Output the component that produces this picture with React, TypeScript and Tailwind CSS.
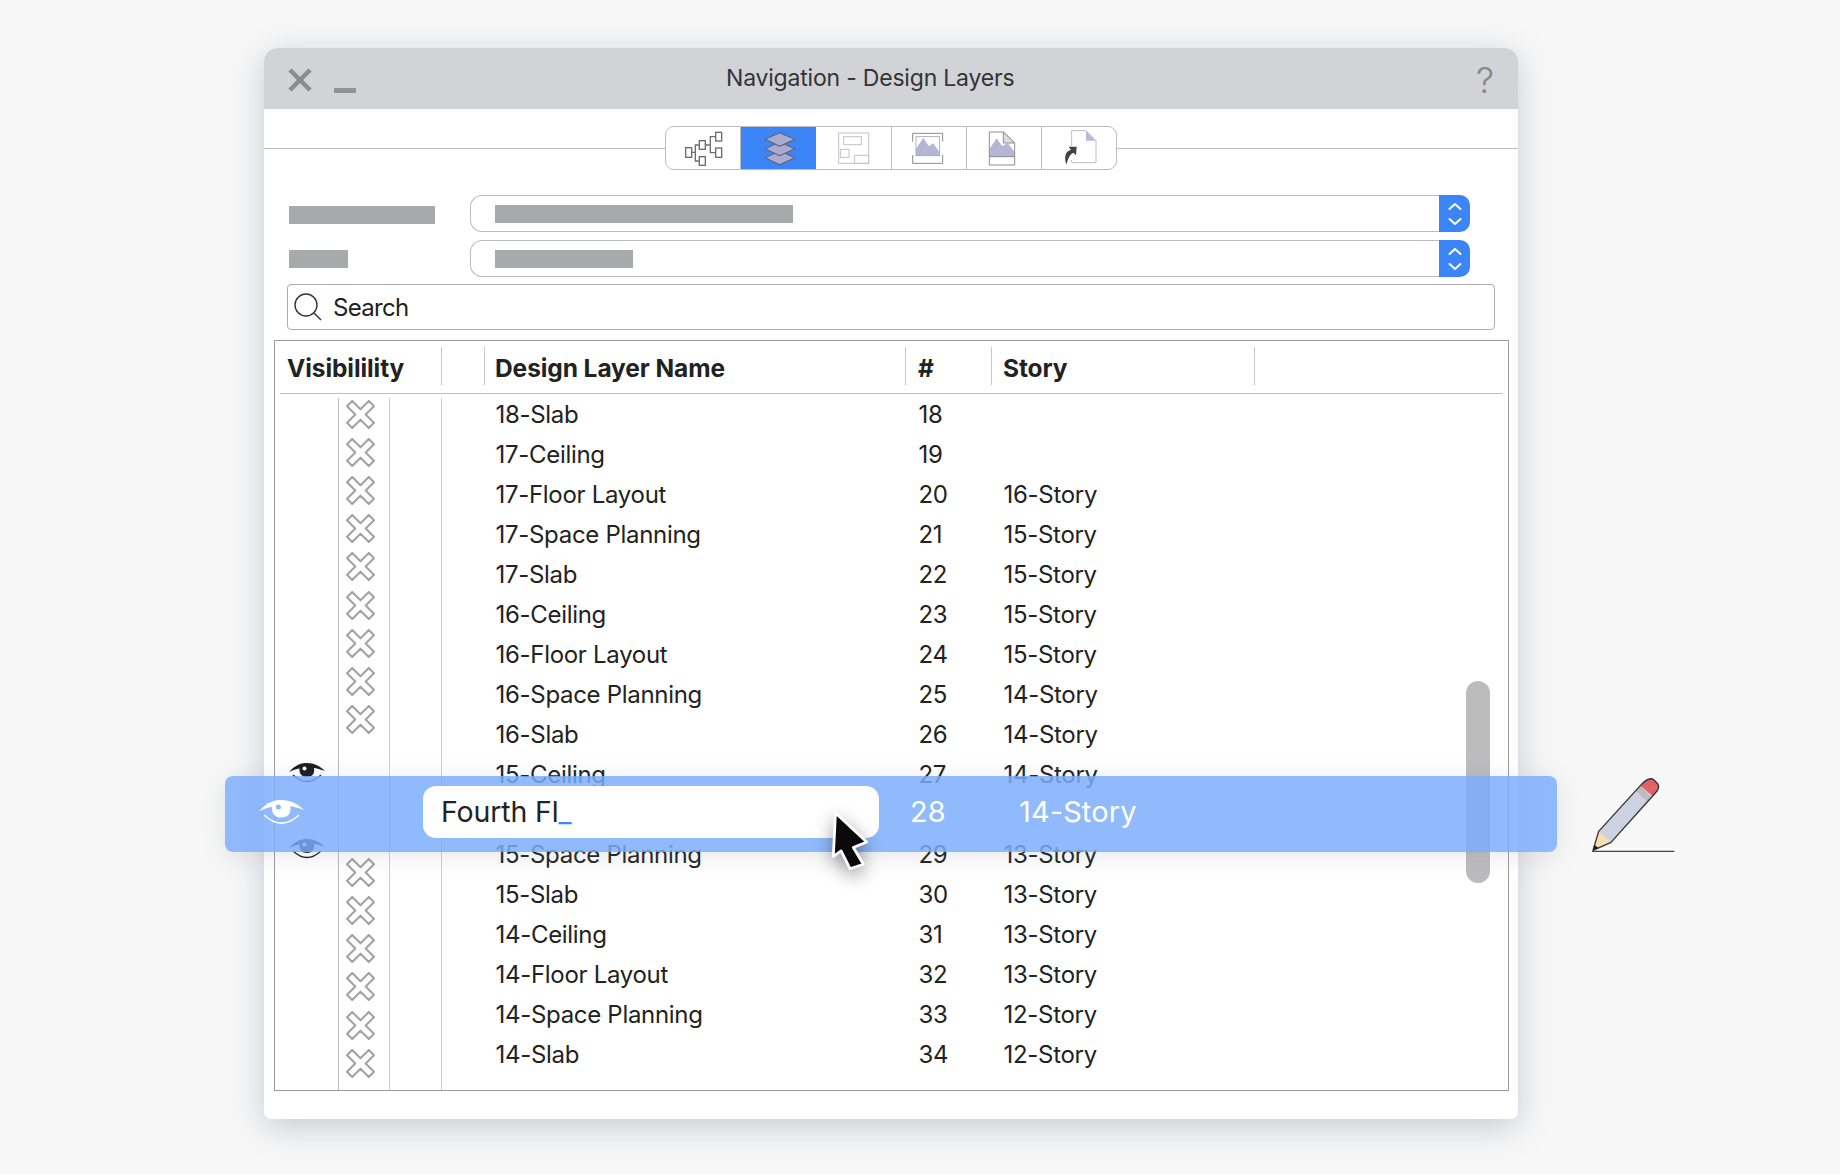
import React from "react";

const font = { fontFamily: "Inter, 'Liberation Sans', sans-serif" };

type Row = [string, string, string] | null;
const rows: Row[] = [
  ["18-Slab", "18", ""],
  ["17-Ceiling", "19", ""],
  ["17-Floor Layout", "20", "16-Story"],
  ["17-Space Planning", "21", "15-Story"],
  ["17-Slab", "22", "15-Story"],
  ["16-Ceiling", "23", "15-Story"],
  ["16-Floor Layout", "24", "15-Story"],
  ["16-Space Planning", "25", "14-Story"],
  ["16-Slab", "26", "14-Story"],
  ["15-Ceiling", "27", "14-Story"],
  null,
  ["15-Space Planning", "29", "13-Story"],
  ["15-Slab", "30", "13-Story"],
  ["14-Ceiling", "31", "13-Story"],
  ["14-Floor Layout", "32", "13-Story"],
  ["14-Space Planning", "33", "12-Story"],
  ["14-Slab", "34", "12-Story"],
];

const xSlots = [1, 1, 1, 1, 1, 1, 1, 1, 1, 0, 0, 0, 1, 1, 1, 1, 1, 1];

function CrossIcon() {
  return (
    <svg width="29" height="29" viewBox="0 0 28 28">
      <polygon
        points="6,1 14,9 22,1 27,6 19,14 27,22 22,27 14,19 6,27 1,22 9,14 1,6"
        fill="#fff"
        stroke="#a3a3a3"
        strokeWidth="2"
        strokeLinejoin="round"
      />
    </svg>
  );
}

function Eye({ color, w, h }: { color: string; w: number; h: number }) {
  const hole = color === "#fff" ? "#8fb9fb" : "#fff";
  return (
    <svg width={w} height={h} viewBox="0 0 36 20">
      <path d="M0 9 C7 1 13 0 18 0 C25 0 31 3 36 8 C30 6 27 5 25 5 C26 11 23 14 18 14 C13 14 10 11 10.500 5.500 C7 6 4 7 0 9 Z" fill={color} />
      <circle cx="15.500" cy="5.500" r="2" fill={hole} />
      <path d="M4 12 Q18 25 32 12" fill="none" stroke={color} strokeWidth="1.200" />
    </svg>
  );
}

function Chevrons() {
  return (
    <svg width="16" height="24" viewBox="0 0 16 24" fill="none" stroke="#fff" strokeWidth="2" strokeLinecap="round" strokeLinejoin="round">
      <polyline points="2.500,7 8,2 13.500,7" />
      <polyline points="2.500,17 8,22 13.500,17" />
    </svg>
  );
}

function Select({ barW }: { barW: number }) {
  return (
    <div className="w-[1000px] h-[37px] flex">
      <div className="flex-1 flex items-center pl-[24px] border-[1.5px] border-r-0 border-[#bcbcbc] rounded-l-[12px]">
        <div className="h-[18px] bg-[#a7a9ab]" style={{ width: barW }} />
      </div>
      <div className="w-[31px] bg-[#3c85f7] rounded-r-[10px] flex items-center justify-center">
        <Chevrons />
      </div>
    </div>
  );
}

function Seg({ w, x0, active, last, children }: { w: number; x0: number; active?: boolean; last?: boolean; children: React.ReactNode }) {
  return (
    <div className={`h-full shrink-0 ${active ? "bg-[#3c85f7]" : ""} ${last ? "" : "border-r border-[#bdbdbd]"}`} style={{ width: w }}>
      <svg width={w} height={42} viewBox={`${x0} 51 ${w * 3} 126`}>
        {children}
      </svg>
    </div>
  );
}

function Toolbar() {
  return (
    <div className="w-[452px] h-[44px] flex shrink-0 border border-[#bdbdbd] rounded-[9px] overflow-hidden bg-white">
      <Seg w={75} x0={48}>
        <g fill="none" stroke="#6e6e72" strokeWidth="4">
          <rect x="107" y="113" width="18" height="29" />
          <rect x="148" y="92" width="18" height="26" />
          <rect x="148" y="140" width="18" height="26" />
          <rect x="197" y="67" width="18" height="26" />
          <rect x="197" y="114" width="18" height="28" />
          <path d="M125 127 H136 V105 H148 M136 127 V153 H148 M166 105 H181 V80 H197 M181 105 V128 H197" />
        </g>
      </Seg>
      <Seg w={75} x0={272} active last>
        <g fill="#a9abd2" stroke="#5d6278" strokeWidth="3.500" strokeLinejoin="round">
          <polygon points="388,123 434,143 388,164 344,143" />
          <polygon points="388,96 434,116 388,137 344,116" />
          <polygon points="388,68 434,88 388,109 344,88" />
        </g>
      </Seg>
      <Seg w={76} x0={497}>
        <g fill="none" stroke="#c4c4c4" strokeWidth="3">
          <rect x="565" y="69" width="90" height="91" />
          <rect x="580" y="80" width="53" height="24" />
          <rect x="570" y="118" width="26" height="24" />
          <rect x="613" y="136" width="42" height="24" />
        </g>
      </Seg>
      <Seg w={75} x0={728}>
        <polygon points="800,137 800,116 822,84 838,108 852,100 870,126 870,137" fill="#b5b5d6" />
        <rect x="800" y="80" width="71" height="57" fill="none" stroke="#a5a5a5" strokeWidth="2.500" />
        <path d="M790 95 V70 H880 V95 M790 135 V160 H880 V135" fill="none" stroke="#8c8c8c" strokeWidth="3" />
      </Seg>
      <Seg w={75} x0={953}>
        <polygon points="1020,140 1020,118 1042,85 1058,108 1075,100 1096,126 1096,140" fill="#b5b5d6" />
        <path d="M1020 66 H1062 L1096 99 V165 H1020 Z M1020 140 H1096" fill="none" stroke="#8f8f8f" strokeWidth="3" />
        <polygon points="1062,66 1096,99 1062,99" fill="#dcdcdc" stroke="#8f8f8f" strokeWidth="3" strokeLinejoin="round" />
      </Seg>
      <Seg w={74} x0={1178} last>
        <path d="M1267 108 V62 H1310 L1340 92 V158 H1267 V150" fill="none" stroke="#bdbdbd" strokeWidth="3" />
        <polygon points="1310,62 1340,92 1310,92" fill="#b9b9da" />
        <path d="M1251 164 C1242 135 1252 122 1265 120 L1258 110 L1282 110 L1280 136 L1272 128 C1262 132 1256 145 1251 164 Z" fill="#3f4144" />
      </Seg>
    </div>
  );
}

export default function App() {
  return (
    <div className="h-[1174px] w-[1840px] bg-[#f7f7f7] pt-[48px] pl-[264px] overflow-hidden" style={font}>
      <div className="relative w-[1254px] h-[1071px] bg-white rounded-t-[14px] rounded-b-[7px] shadow-[0_8px_32px_rgba(130,140,160,0.42)]">
        {/* Title bar */}
        <div className="h-[61px] bg-[#d2d3d7] rounded-t-[14px] flex items-center pl-[24px] pr-[24px]">
          <div className="w-[438px] shrink-0 flex items-end gap-[22px] pt-[3px]">
            <svg width="24" height="24" viewBox="0 0 24 24" stroke="#898b8d" strokeWidth="4.500">
              <path d="M2 2 L22 22 M22 2 L2 22" />
            </svg>
            <div className="w-[22px] h-[5px] bg-[#909294] mb-[-1px]" />
          </div>
          <div className="text-[23px] text-[#333438] tracking-[-0.2px] -mt-[1px]">Navigation - Design Layers</div>
          <div className="ml-auto text-[36px] font-light leading-none text-[#86888a] mt-[3px]">?</div>
        </div>

        {/* Toolbar */}
        <div className="mt-[17px] flex items-center">
          <div className="flex-1 h-[1px] bg-[#c0c0c0]" />
          <Toolbar />
          <div className="flex-1 h-[1px] bg-[#c0c0c0]" />
        </div>

        {/* Form */}
        <div className="mt-[25px] pl-[25px] flex items-center">
          <div className="w-[181px]">
            <div className="w-[146px] h-[18px] bg-[#a7a9ab] mt-[3px]" />
          </div>
          <Select barW={298} />
        </div>
        <div className="mt-[8px] pl-[25px] flex items-center">
          <div className="w-[181px]">
            <div className="w-[59px] h-[18px] bg-[#a7a9ab] mt-[1px]" />
          </div>
          <Select barW={138} />
        </div>
        <div className="mt-[7px] ml-[23px] w-[1208px] h-[46px] border border-[#acacac] rounded-[4px] flex items-center pl-[6px]">
          <svg width="28" height="28" viewBox="0 0 28 28" fill="none" stroke="#333" strokeWidth="1.400">
            <circle cx="12" cy="12" r="11" />
            <path d="M20 20 L27 27" />
          </svg>
          <span className="ml-[11px] text-[24px] tracking-[-0.7px] text-[#222] mt-[1px]">Search</span>
        </div>

        {/* Table */}
        <div className="relative mt-[10px] ml-[10px] w-[1235px] h-[751px] border-[1.5px] border-[#9b9b9b] text-[24px] tracking-[-0.3px] text-[#222] overflow-hidden">
          <div className="h-[53px] mx-[5px] border-b border-[#bdbdbd] pt-[6px]">
            <div className="flex h-[38px] items-center font-bold text-[24.500px] tracking-[-0.08px] -ml-[5px]">
              <div className="w-[166px] pl-[12px] pt-[4px]">Visibilility</div>
              <div className="w-[43px] h-full border-l border-[#c8c8c8]" />
              <div className="w-[421px] h-full border-l border-[#c8c8c8] pl-[10px] pt-[4px] flex items-center">Design Layer Name</div>
              <div className="w-[86px] h-full border-l border-[#c8c8c8] pl-[12px] pt-[4px] flex items-center">#</div>
              <div className="w-[263px] h-full border-l border-[#c8c8c8] pl-[11px] pt-[4px] flex items-center">Story</div>
              <div className="h-full border-l border-[#c8c8c8]" />
            </div>
          </div>
          <div className="flex mt-[4px] h-[693px]">
            <div className="w-[63px] flex flex-col pt-[356px] pl-[14px]">
              <div className="h-[38px] flex items-center"><Eye color="#1d1d1f" w={36} h={20} /></div>
              <div className="h-[38px]" />
              <div className="h-[38px] flex items-center"><Eye color="#1d1d1f" w={36} h={20} /></div>
            </div>
            <div className="w-[51px] border-l border-[#bdbdbd] pl-[7px]">
              <div className="-mt-[3px] flex flex-col">
                {xSlots.map((s, i) => (
                  <div key={i} className="h-[38.2px] flex items-center">
                    {s ? <CrossIcon /> : null}
                  </div>
                ))}
              </div>
            </div>
            <div className="w-[52px] border-l-[1.5px] border-[#cfcfcf]" />
            <div className="flex-1 border-l-[1.5px] border-[#cfcfcf] pl-[53.500px]">
              <div className="-mt-[3px]">
                {rows.map((r, i) => (
                  <div key={i} className="h-[40px] flex items-center">
                    {r && (
                      <>
                        <div className="w-[423px] shrink-0">{r[0]}</div>
                        <div className="w-[85px] shrink-0">{r[1]}</div>
                        <div>{r[2]}</div>
                      </>
                    )}
                  </div>
                ))}
              </div>
            </div>
          </div>
          <div className="absolute top-[340px] right-[18px] w-[24px] h-[202px] rounded-[12px] bg-[#bcbcbd]" />
        </div>

        {/* Renaming row laid over the list */}
        <div className="absolute left-[-39px] top-[728px] w-[1332px] h-[76px] rounded-[8px] bg-[rgba(123,173,250,0.84)] shadow-[0_4px_26px_rgba(110,120,140,0.18)] flex items-center pl-[34px] pb-[4px] text-white">
          <Eye color="#fff" w={45} h={25} />
          <div className="ml-[119px] w-[456px] h-[52px] bg-white rounded-[13px] flex items-center pl-[18px] text-[28.500px] tracking-[-0.15px] text-[#222] shrink-0">
            Fourth Fl<span className="text-[#3c85f7]">_</span>
          </div>
          <div className="ml-[31px] w-[109px] text-[29px] shrink-0">28</div>
          <div className="text-[29px] tracking-[0.1px]">14-Story</div>
        </div>

        {/* Mouse pointer */}
        <svg className="absolute left-[558px] top-[755px] drop-shadow-[0_6px_9px_rgba(0,0,0,0.4)]" width="56" height="78" viewBox="0 0 50 70">
          <polygon points="12,9 40,35 28,40 37,55 25,59 17,43 10,48" fill="#0a0a0a" stroke="#fff" strokeWidth="2.500" strokeLinejoin="round" />
        </svg>

        {/* Pencil */}
        <svg className="absolute left-[1323px] top-[725px]" width="90" height="84" viewBox="500 340 270 252">
          <path d="M518 572 L535 515 L660 378 Q685 350 700 360 L712 372 Q720 385 705 400 L572 548 Z" fill="#cdd2e2" />
          <path d="M518 572 L535 518 L572 548 Z" fill="#f5dfb0" />
          <path d="M646 393 L660 378 L692 412 L680 425 Z" fill="#bdbdbd" />
          <path d="M660 378 Q685 350 700 360 L712 372 Q720 385 696 408 Z" fill="#e0636b" />
          <path d="M518 572 L535 515 L660 378 Q685 350 700 360 L712 372 Q720 385 705 400 L572 548 Z" fill="none" stroke="#333" strokeWidth="4" strokeLinejoin="round" />
          <path d="M518 572 L522 555 L535 565 Z" fill="#222" />
          <path d="M515 575 H762" stroke="#444" strokeWidth="4" />
        </svg>
      </div>
    </div>
  );
}
